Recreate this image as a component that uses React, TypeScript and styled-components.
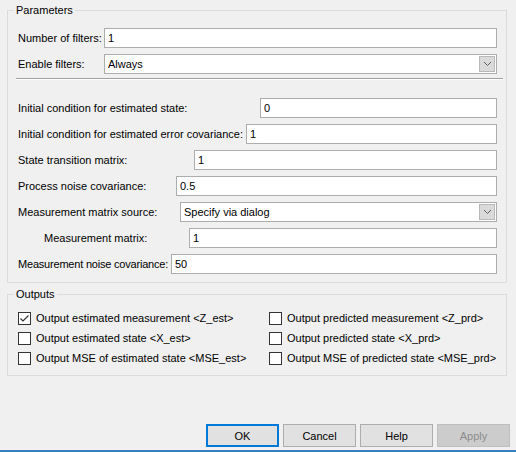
import React from 'react';
import styled, { createGlobalStyle } from 'styled-components';

const Global = createGlobalStyle`
  html, body { margin: 0; padding: 0; background: #f0f0f0; }
  body {
    font-family: "Liberation Sans", Arial, sans-serif;
    font-size: 11px;
    color: #000;
  }
`;

const Window = styled.div`
  width: 516px;
  height: 452px;
  box-sizing: border-box;
  background: #f0f0f0;
  display: flex;
  flex-direction: column;
  border-bottom: 2px solid #3b7fc0;
`;

const Group = styled.fieldset<{ $top: number; $pt: number; $pb: number }>`
  margin: ${(p) => p.$top}px 9px 0 7px;
  padding: ${(p) => p.$pt}px 9px ${(p) => p.$pb}px 10px;
  border: 1px solid #dcdcdc;
  min-width: 0;
`;

const Legend = styled.legend`
  font-size: 11px;
  line-height: 13px;
  padding: 0 2px;
  margin-left: -4px;
  color: #000;
`;

const Rows = styled.div`
  display: flex;
  flex-direction: column;
  gap: 6px;
`;

const Row = styled.div<{ $w: number }>`
  display: grid;
  grid-template-columns: ${(p) => p.$w}px minmax(0, 1fr);
  align-items: center;
  height: 20px;
`;

const Label = styled.div<{ $indent?: number; $ls?: number }>`
  box-sizing: border-box;
  padding-left: ${(p) => p.$indent ?? 0}px;
  letter-spacing: ${(p) => p.$ls ?? 0}px;
  white-space: nowrap;
  line-height: 13px;
`;

const TextField = styled.input`
  width: 100%;
  height: 20px;
  box-sizing: border-box;
  border: 1px solid #adadad;
  background: #fff;
  padding: 0 3px;
  font-family: "Liberation Sans", Arial, sans-serif;
  font-size: 11px;
  color: #000;
  outline: none;
`;

const Combo = styled.div`
  height: 20px;
  box-sizing: border-box;
  border: 1px solid #adadad;
  background: #fff;
  display: flex;
  align-items: center;
  padding-left: 3px;
`;

const ComboText = styled.span`
  flex: 1;
  line-height: 13px;
`;

const ComboButton = styled.div`
  width: 16px;
  height: 16px;
  margin-right: 1px;
  box-sizing: border-box;
  background: #dadada;
  border: 1px solid #b9b9b9;
  display: flex;
  align-items: center;
  justify-content: center;
`;

const Separator = styled.div`
  height: 1px;
  border-top: 1px solid #a0a0a0;
  background: #fff;
  margin: -2px -6px 12px -2px;
`;

const CheckGrid = styled.div`
  display: grid;
  grid-template-columns: 251px 1fr;
  grid-auto-rows: 20px;
`;

const CheckItem = styled.label`
  display: flex;
  align-items: center;
  white-space: nowrap;
  line-height: 13px;
`;

const Box = styled.span`
  width: 13px;
  height: 13px;
  box-sizing: border-box;
  border: 1px solid #333;
  background: #fff;
  margin-right: 5px;
  display: flex;
  align-items: center;
  justify-content: center;
`;

const ButtonBar = styled.div`
  margin-top: auto;
  margin-bottom: 3px;
  padding-right: 6px;
  display: flex;
  justify-content: flex-end;
  gap: 4px;
`;

const Button = styled.button<{ $primary?: boolean }>`
  width: 73px;
  height: 23px;
  box-sizing: border-box;
  font-family: "Liberation Sans", Arial, sans-serif;
  font-size: 11px;
  color: ${(p) => (p.disabled ? '#8c8c8c' : '#000')};
  background: ${(p) => (p.disabled ? '#cccccc' : '#e1e1e1')};
  border: 1px solid ${(p) => (p.$primary ? '#0078d7' : p.disabled ? '#bfbfbf' : '#adadad')};
  box-shadow: ${(p) => (p.$primary ? 'inset 0 0 0 1px #0078d7' : 'none')};
  padding: 0;
`;

const Chevron = () => (
  <svg width="9" height="6" viewBox="0 0 9 6">
    <path d="M1 1 L4.5 4.5 L8 1" fill="none" stroke="#606060" strokeWidth="1" />
  </svg>
);

const Check = () => (
  <svg width="11" height="11" viewBox="0 0 11 11">
    <path d="M1.5 5.5 L4 8 L9.5 2.5" fill="none" stroke="#333" strokeWidth="1.2" />
  </svg>
);

type FieldRow = {
  label: string;
  w: number;
  value: string;
  indent?: number;
  combo?: boolean;
  ls?: number;
};

const paramRows: FieldRow[] = [
  { label: 'Initial condition for estimated state:', w: 242, value: '0' },
  { label: 'Initial condition for estimated error covariance:', w: 228, value: '1' },
  { label: 'State transition matrix:', w: 176, value: '1' },
  { label: 'Process noise covariance:', w: 158, value: '0.5' },
  { label: 'Measurement matrix source:', w: 162, value: 'Specify via dialog', combo: true },
  { label: 'Measurement matrix:', w: 171, value: '1', indent: 26 },
  { label: 'Measurement noise covariance:', w: 153, value: '50', ls: -0.2 },
];

const outputs: { text: string; checked: boolean }[] = [
  { text: 'Output estimated measurement <Z_est>', checked: true },
  { text: 'Output predicted measurement <Z_prd>', checked: false },
  { text: 'Output estimated state <X_est>', checked: false },
  { text: 'Output predicted state <X_prd>', checked: false },
  { text: 'Output MSE of estimated state <MSE_est>', checked: false },
  { text: 'Output MSE of predicted state <MSE_prd>', checked: false },
];

const Field = ({ row }: { row: FieldRow }) => (
  <Row $w={row.w}>
    <Label $indent={row.indent} $ls={row.ls}>{row.label}</Label>
    {row.combo ? (
      <Combo>
        <ComboText>{row.value}</ComboText>
        <ComboButton><Chevron /></ComboButton>
      </Combo>
    ) : (
      <TextField readOnly value={row.value} />
    )}
  </Row>
);

export default function App() {
  return (
    <>
      <Global />
      <Window>
        <Group $top={4} $pt={11} $pb={8}>
          <Legend>Parameters</Legend>
          <Rows>
            <Field row={{ label: 'Number of filters:', w: 86, value: '1' }} />
            <Field row={{ label: 'Enable filters:', w: 86, value: 'Always', combo: true }} />
            <Separator />
            {paramRows.map((r) => (
              <Field key={r.label} row={r} />
            ))}
          </Rows>
        </Group>
        <Group $top={5} $pt={7} $pb={7}>
          <Legend>Outputs</Legend>
          <CheckGrid>
            {outputs.map((o) => (
              <CheckItem key={o.text}>
                <Box>{o.checked && <Check />}</Box>
                {o.text}
              </CheckItem>
            ))}
          </CheckGrid>
        </Group>
        <ButtonBar>
          <Button $primary>OK</Button>
          <Button>Cancel</Button>
          <Button>Help</Button>
          <Button disabled>Apply</Button>
        </ButtonBar>
      </Window>
    </>
  );
}
